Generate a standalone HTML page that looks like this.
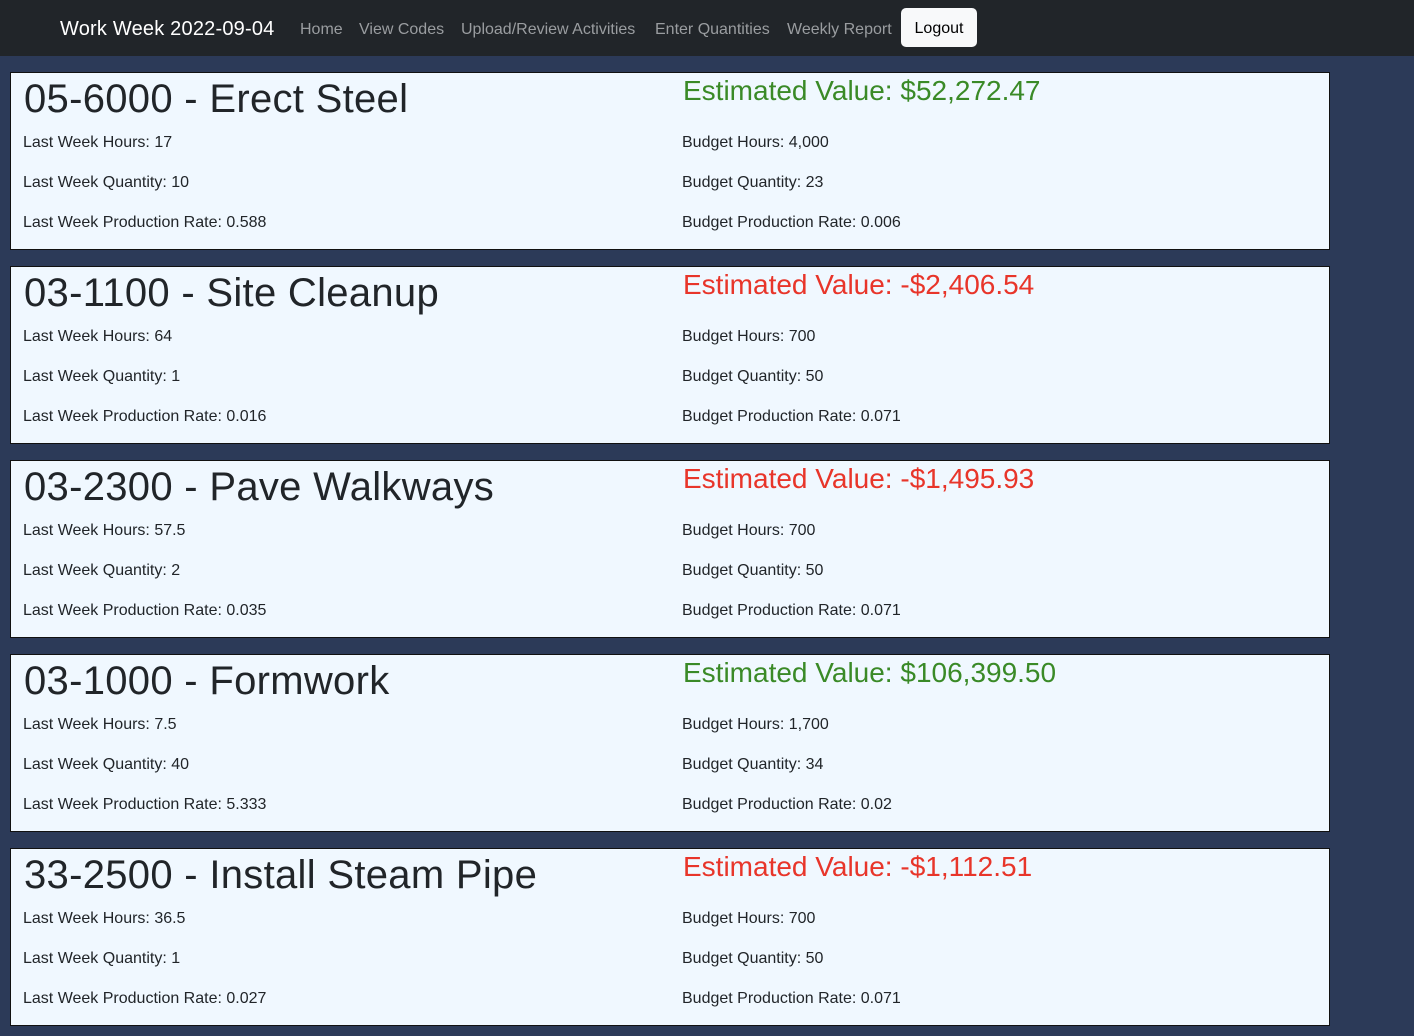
<!DOCTYPE html>
<html><head><meta charset="utf-8"><style>
*{box-sizing:border-box;margin:0;padding:0}
body{width:1414px;height:1036px;background:#2c3a58;font-family:"Liberation Sans",sans-serif;color:#212529;overflow:hidden}
.nav{height:56px;background:#212529;position:relative}
.brand{position:absolute;left:60px;top:16px;color:#fff;font-size:20px;line-height:26px;letter-spacing:0.2px}
.l{position:absolute;top:20px;font-size:16px;color:#9a9da0;line-height:20px;white-space:nowrap}
.logout{position:absolute;left:901px;top:8px;width:76px;height:39px;background:#f8f9fa;border-radius:5px;color:#000;font-size:16px;line-height:41px;text-align:center}
.card{position:absolute;left:10px;width:1320px;height:178px;background:#f0f8ff;border:1px solid #111}
.h{position:absolute;left:13px;top:2px;font-size:40px;line-height:48px;white-space:nowrap;letter-spacing:0.3px}
.ev{position:absolute;left:672px;top:1px;font-size:28px;line-height:34px;white-space:nowrap}
.g{color:#3a8a27}.r{color:#e8352a}
.p{position:absolute;font-size:16px;line-height:24px;white-space:nowrap;margin-top:1px}
</style></head><body>
<div class="nav"><div class="brand">Work Week 2022-09-04</div>
<div class="l" style="left:300px">Home</div><div class="l" style="left:359px">View Codes</div><div class="l" style="left:461px">Upload/Review Activities</div><div class="l" style="left:655px">Enter Quantities</div><div class="l" style="left:787px">Weekly Report</div>
<div class="logout">Logout</div></div>

<div class="card" style="top:72px"><div class="h">05-6000 - Erect Steel</div><div class="ev g">Estimated Value: $52,272.47</div>
<div class="p" style="left:12px;top:57px">Last Week Hours: 17</div><div class="p" style="left:12px;top:97px">Last Week Quantity: 10</div><div class="p" style="left:12px;top:137px">Last Week Production Rate: 0.588</div>
<div class="p" style="left:671px;top:57px">Budget Hours: 4,000</div><div class="p" style="left:671px;top:97px">Budget Quantity: 23</div><div class="p" style="left:671px;top:137px">Budget Production Rate: 0.006</div></div>

<div class="card" style="top:266px"><div class="h">03-1100 - Site Cleanup</div><div class="ev r">Estimated Value: -$2,406.54</div>
<div class="p" style="left:12px;top:57px">Last Week Hours: 64</div><div class="p" style="left:12px;top:97px">Last Week Quantity: 1</div><div class="p" style="left:12px;top:137px">Last Week Production Rate: 0.016</div>
<div class="p" style="left:671px;top:57px">Budget Hours: 700</div><div class="p" style="left:671px;top:97px">Budget Quantity: 50</div><div class="p" style="left:671px;top:137px">Budget Production Rate: 0.071</div></div>

<div class="card" style="top:460px"><div class="h">03-2300 - Pave Walkways</div><div class="ev r">Estimated Value: -$1,495.93</div>
<div class="p" style="left:12px;top:57px">Last Week Hours: 57.5</div><div class="p" style="left:12px;top:97px">Last Week Quantity: 2</div><div class="p" style="left:12px;top:137px">Last Week Production Rate: 0.035</div>
<div class="p" style="left:671px;top:57px">Budget Hours: 700</div><div class="p" style="left:671px;top:97px">Budget Quantity: 50</div><div class="p" style="left:671px;top:137px">Budget Production Rate: 0.071</div></div>

<div class="card" style="top:654px"><div class="h">03-1000 - Formwork</div><div class="ev g">Estimated Value: $106,399.50</div>
<div class="p" style="left:12px;top:57px">Last Week Hours: 7.5</div><div class="p" style="left:12px;top:97px">Last Week Quantity: 40</div><div class="p" style="left:12px;top:137px">Last Week Production Rate: 5.333</div>
<div class="p" style="left:671px;top:57px">Budget Hours: 1,700</div><div class="p" style="left:671px;top:97px">Budget Quantity: 34</div><div class="p" style="left:671px;top:137px">Budget Production Rate: 0.02</div></div>

<div class="card" style="top:848px"><div class="h">33-2500 - Install Steam Pipe</div><div class="ev r">Estimated Value: -$1,112.51</div>
<div class="p" style="left:12px;top:57px">Last Week Hours: 36.5</div><div class="p" style="left:12px;top:97px">Last Week Quantity: 1</div><div class="p" style="left:12px;top:137px">Last Week Production Rate: 0.027</div>
<div class="p" style="left:671px;top:57px">Budget Hours: 700</div><div class="p" style="left:671px;top:97px">Budget Quantity: 50</div><div class="p" style="left:671px;top:137px">Budget Production Rate: 0.071</div></div>
</body></html>
